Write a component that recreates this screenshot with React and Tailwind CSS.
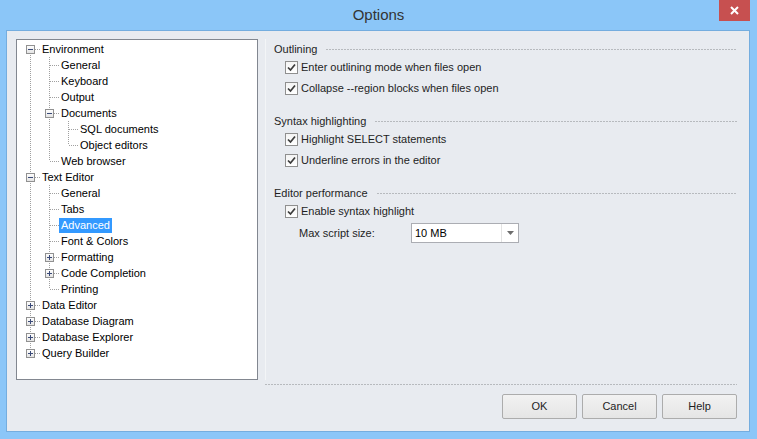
import React from "react";

const FONT = { fontFamily: '"Liberation Sans", Arial, sans-serif' };

const TREE = [
  {
    label: "Environment",
    children: [
      { label: "General" },
      { label: "Keyboard" },
      { label: "Output" },
      { label: "Documents", children: [{ label: "SQL documents" }, { label: "Object editors" }] },
      { label: "Web browser" },
    ],
  },
  {
    label: "Text Editor",
    children: [
      { label: "General" },
      { label: "Tabs" },
      { label: "Advanced", selected: true },
      { label: "Font & Colors" },
      { label: "Formatting", collapsed: true },
      { label: "Code Completion", collapsed: true },
      { label: "Printing" },
    ],
  },
  { label: "Data Editor", collapsed: true },
  { label: "Database Diagram", collapsed: true },
  { label: "Database Explorer", collapsed: true },
  { label: "Query Builder", collapsed: true },
];

// flatten the tree into rows, keeping track of which guide lines to draw
function flatten(nodes, guides = [], out = []) {
  nodes.forEach((n, i) => {
    const last = i === nodes.length - 1;
    const first = guides.length === 0 && i === 0;
    out.push({ ...n, guides, last, first, expandable: !!n.children || n.collapsed });
    if (n.children) flatten(n.children, [...guides, !last], out);
  });
  return out;
}

const LINE = "#a0a0a0";

function Guide({ on }) {
  return (
    <svg width="19" height="16" className="shrink-0">
      {on && <line x1="9.5" y1="0" x2="9.5" y2="16" stroke={LINE} strokeDasharray="1 1" />}
    </svg>
  );
}

function Connector({ row }) {
  const top = row.first ? 8 : 0;
  const bottom = row.last ? 8 : 16;
  return (
    <svg width="19" height="16" className="shrink-0">
      <line x1="9.5" y1={top} x2="9.5" y2={bottom} stroke={LINE} strokeDasharray="1 1" />
      <line x1="10" y1="8.5" x2="19" y2="8.5" stroke={LINE} strokeDasharray="1 1" />
      {row.expandable && (
        <g>
          <defs>
            <linearGradient id="exp" x1="0" y1="0" x2="0" y2="1">
              <stop offset="0" stopColor="#ffffff" />
              <stop offset="1" stopColor="#e2e2e2" />
            </linearGradient>
          </defs>
          <rect x="5.5" y="4.5" width="8" height="8" fill="url(#exp)" stroke="#919191" />
          <line x1="7" y1="8.5" x2="12" y2="8.5" stroke="#3a4a78" />
          {row.collapsed && <line x1="9.5" y1="6" x2="9.5" y2="11" stroke="#3a4a78" />}
        </g>
      )}
    </svg>
  );
}

function TreeView() {
  const rows = flatten(TREE);
  return (
    <div className="w-[242px] h-[341px] shrink-0 bg-white border border-[#828790] pl-[4px] pt-[1px]">
      {rows.map((r, i) => (
        <div key={i} className="flex items-center h-[16px]">
          {r.guides.map((g, j) => (
            <Guide key={j} on={g} />
          ))}
          <Connector row={r} />
          <span
            className={
              "px-[2px] leading-[15px] h-[15px] whitespace-nowrap text-[11px] " +
              (r.selected ? "bg-[#3399ff] text-white" : "text-black")
            }
          >
            {r.label}
          </span>
        </div>
      ))}
    </div>
  );
}

function Dots() {
  return (
    <div className="flex-1 h-px bg-[linear-gradient(to_right,#b7babe_2px,transparent_2px)] bg-[length:3px_1px]" />
  );
}

function GroupHeader({ children, className = "" }) {
  return (
    <div className={"flex items-center h-[16px] gap-[9px] " + className}>
      <span className="text-[11px] text-[#1e1e1e]">{children}</span>
      <Dots />
    </div>
  );
}

function Check({ label }) {
  return (
    <div className="flex items-center h-[21px] pl-[11px] gap-[3px]">
      <span className="w-[13px] h-[13px] border border-[#8f8f8f] bg-gradient-to-b from-[#f4f4f4] to-[#ffffff] flex items-center justify-center">
        <svg width="9" height="9" viewBox="0 0 9 9">
          <path d="M1 4.5 L3.5 7 L8 1.5" fill="none" stroke="#3b3b3b" strokeWidth="1.7" />
        </svg>
      </span>
      <span className="text-[11px] text-[#1e1e1e]">{label}</span>
    </div>
  );
}

function Button({ children }) {
  return (
    <button className="w-[75px] h-[25px] rounded-[2px] border border-[#acacac] bg-gradient-to-b from-[#f2f2f2] to-[#e5e5e5] text-[11px] text-[#1e1e1e]">
      {children}
    </button>
  );
}

export default function App() {
  return (
    <div style={FONT} className="w-[757px] h-[439px] bg-[#8bc6f8] flex flex-col overflow-hidden">
      {/* Title bar */}
      <div className="relative h-[30px] shrink-0 flex items-center justify-center">
        <span className="text-[15px] text-[#333] mt-[1px]">Options</span>
        <div className="absolute top-0 right-[7px] w-[31px] h-[21px] bg-[#c75050] flex items-center justify-center">
          <svg width="9" height="9" viewBox="0 0 9 9">
            <path d="M1 1 L8 8 M8 1 L1 8" stroke="#fff" strokeWidth="2" />
          </svg>
        </div>
      </div>

      {/* Client area */}
      <div className="ml-[6px] mr-[7px] h-[402px] border border-[#74addf] bg-[#e8ebf0] flex flex-col pt-[8px] pl-[9px] pr-[12px]">
        <div className="flex gap-[7px]">
          <TreeView />

          <div className="flex-1 h-[341px] border-l border-[#f3f5f7] pl-[8px] pt-[2px]">
            <GroupHeader>Outlining</GroupHeader>
            <Check label="Enter outlining mode when files open" />
            <Check label="Collapse --region blocks when files open" />

            <GroupHeader className="mt-[14px]">Syntax highlighting</GroupHeader>
            <Check label="Highlight SELECT statements" />
            <Check label="Underline errors in the editor" />

            <GroupHeader className="mt-[14px]">Editor performance</GroupHeader>
            <Check label="Enable syntax highlight" />
            <div className="flex items-center h-[22px] pl-[25px]">
              <span className="w-[112px] text-[11px] text-[#1e1e1e]">Max script size:</span>
              <div className="w-[108px] h-[20px] bg-white border border-[#abadb3] flex items-center">
                <span className="flex-1 pl-[3px] text-[11px] text-black">10 MB</span>
                <div className="w-[17px] h-full border-l border-[#e3e3e3] flex items-center justify-center">
                  <svg width="7" height="4" viewBox="0 0 7 4">
                    <path d="M0 0 H7 L3.5 4 Z" fill="#6d6d6d" />
                  </svg>
                </div>
              </div>
            </div>
          </div>
        </div>

        <div className="ml-[249px] mt-[4px] flex">
          <Dots />
        </div>

        <div className="flex justify-end gap-[5px] mt-[9px]">
          <Button>OK</Button>
          <Button>Cancel</Button>
          <Button>Help</Button>
        </div>
      </div>
    </div>
  );
}
